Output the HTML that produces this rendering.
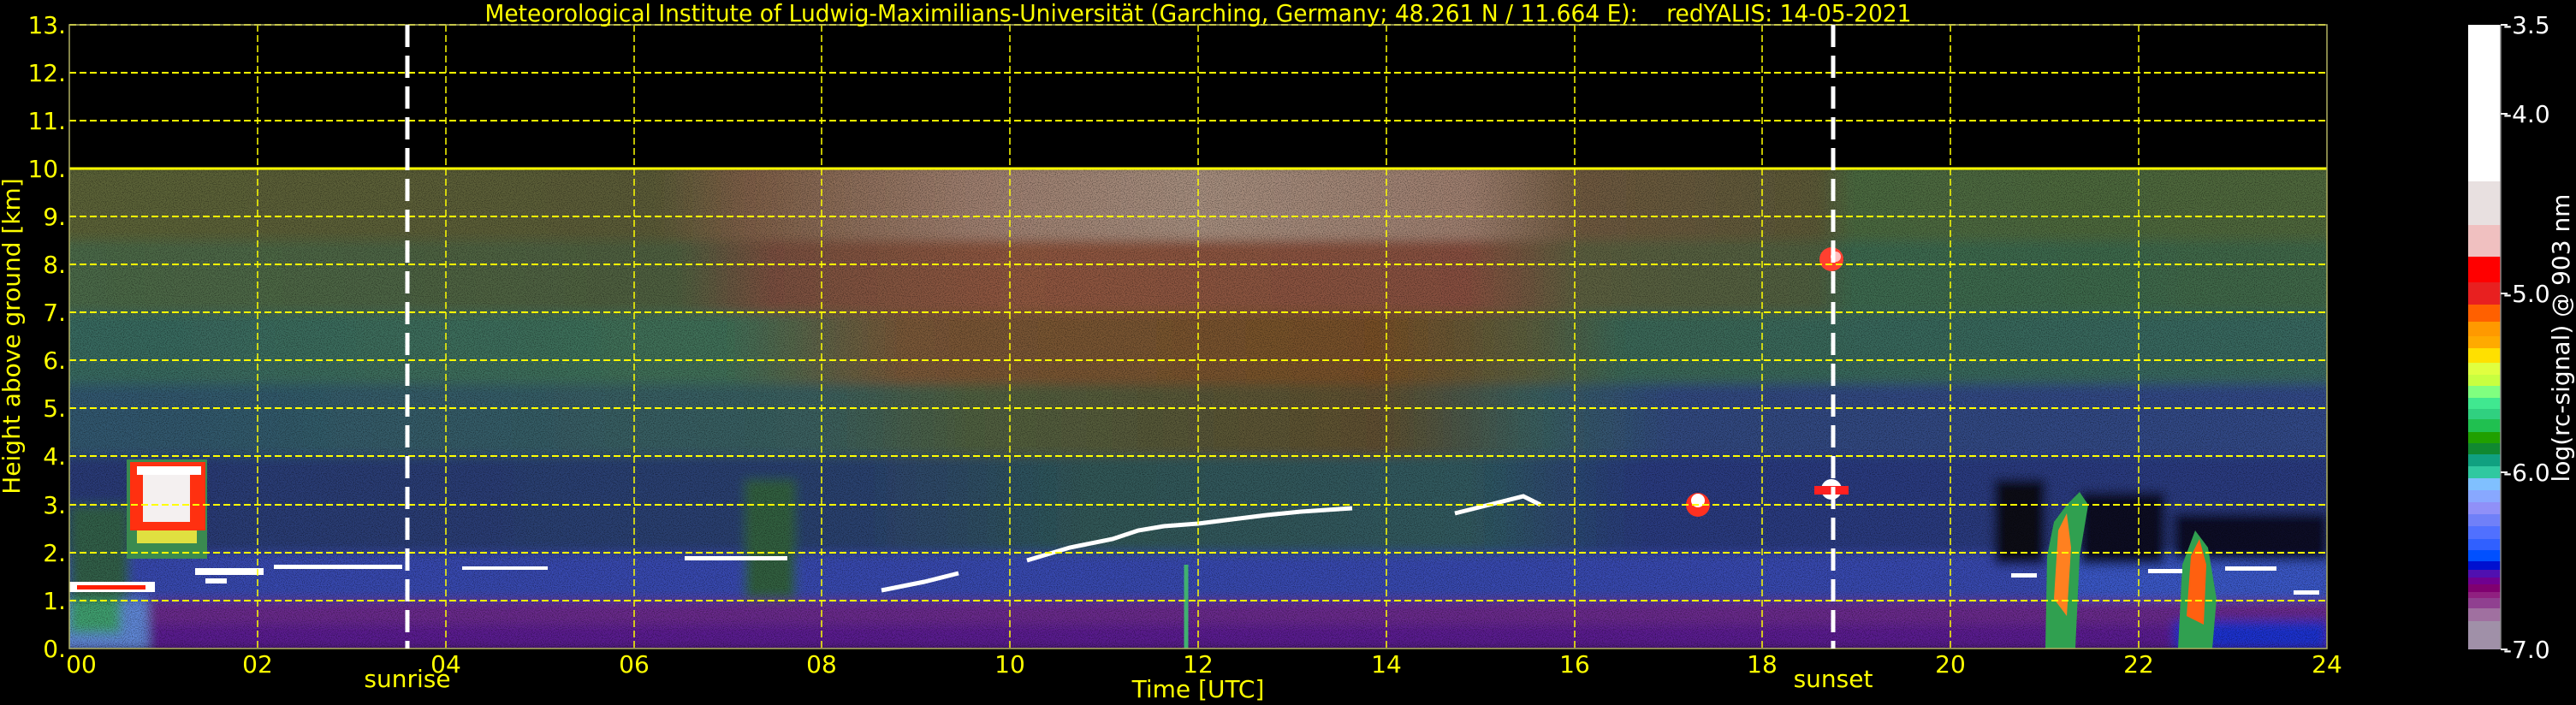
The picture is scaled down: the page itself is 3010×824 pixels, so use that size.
<!DOCTYPE html>
<html><head><meta charset="utf-8"><style>
html,body{margin:0;padding:0;background:#000;width:3010px;height:824px;overflow:hidden}
svg{display:block}
text{font-family:"DejaVu Sans","Liberation Sans",sans-serif;fill:#ffff00}
</style></head><body>
<svg width="3010" height="824" viewBox="0 0 3010 824" xmlns="http://www.w3.org/2000/svg">
<defs>
<linearGradient id="gA" x1="81" x2="2719" gradientUnits="userSpaceOnUse">
<stop offset="0" stop-color="#5c6438"/><stop offset=".26" stop-color="#5c5c38"/><stop offset=".3" stop-color="#806048"/><stop offset=".4" stop-color="#a08070"/><stop offset=".5" stop-color="#a89080"/><stop offset=".62" stop-color="#a08070"/><stop offset=".67" stop-color="#705a40"/><stop offset=".775" stop-color="#5c5a38"/><stop offset=".79" stop-color="#4c6a40"/><stop offset="1" stop-color="#50683c"/></linearGradient>
<linearGradient id="gB" x1="81" x2="2719" gradientUnits="userSpaceOnUse">
<stop offset="0" stop-color="#4c6a48"/><stop offset=".27" stop-color="#506040"/><stop offset=".31" stop-color="#7a5040"/><stop offset=".42" stop-color="#905840"/><stop offset=".62" stop-color="#885040"/><stop offset=".67" stop-color="#5c6040"/><stop offset=".775" stop-color="#506040"/><stop offset=".79" stop-color="#3c6a50"/><stop offset="1" stop-color="#406848"/></linearGradient>
<linearGradient id="gC" x1="81" x2="2719" gradientUnits="userSpaceOnUse">
<stop offset="0" stop-color="#386a60"/><stop offset=".29" stop-color="#407058"/><stop offset=".37" stop-color="#7a5838"/><stop offset=".58" stop-color="#785028"/><stop offset=".65" stop-color="#5a6040"/><stop offset=".69" stop-color="#3a6858"/><stop offset="1" stop-color="#386860"/></linearGradient>
<linearGradient id="gD" x1="81" x2="2719" gradientUnits="userSpaceOnUse">
<stop offset="0" stop-color="#305870"/><stop offset=".33" stop-color="#3a6060"/><stop offset=".4" stop-color="#506040"/><stop offset=".58" stop-color="#605030"/><stop offset=".65" stop-color="#3a6060"/><stop offset=".71" stop-color="#304a80"/><stop offset="1" stop-color="#304a88"/></linearGradient>
<linearGradient id="gE" x1="81" x2="2719" gradientUnits="userSpaceOnUse">
<stop offset="0" stop-color="#2a3a78"/><stop offset=".35" stop-color="#2c4270"/><stop offset=".45" stop-color="#305858"/><stop offset=".62" stop-color="#305a60"/><stop offset=".7" stop-color="#2a3a80"/><stop offset="1" stop-color="#2a3a80"/></linearGradient>
<linearGradient id="cb" x1="0" y1="29" x2="0" y2="759" gradientUnits="userSpaceOnUse">
<stop offset="0" stop-color="#fff"/><stop offset=".2507" stop-color="#fff"/><stop offset=".2507" stop-color="#e8e0e0"/><stop offset=".3205" stop-color="#e8e0e0"/><stop offset=".3205" stop-color="#f0c0c0"/><stop offset=".3712" stop-color="#f0c0c0"/><stop offset=".3712" stop-color="#ff0000"/><stop offset=".4123" stop-color="#ff0000"/><stop offset=".4123" stop-color="#e82020"/><stop offset=".4479" stop-color="#e82020"/><stop offset=".4479" stop-color="#ff6000"/><stop offset=".4753" stop-color="#ff6000"/><stop offset=".4753" stop-color="#ff9900"/><stop offset=".4986" stop-color="#ff9900"/><stop offset=".4986" stop-color="#ffaa00"/><stop offset=".5178" stop-color="#ffaa00"/><stop offset=".5178" stop-color="#ffe000"/><stop offset=".5411" stop-color="#ffe000"/><stop offset=".5411" stop-color="#e0ff40"/><stop offset=".5603" stop-color="#e0ff40"/><stop offset=".5603" stop-color="#c8ff40"/><stop offset=".5781" stop-color="#c8ff40"/><stop offset=".5781" stop-color="#80ff80"/><stop offset=".5973" stop-color="#80ff80"/><stop offset=".5973" stop-color="#40e890"/><stop offset=".6151" stop-color="#40e890"/><stop offset=".6151" stop-color="#30d080"/><stop offset=".6315" stop-color="#30d080"/><stop offset=".6315" stop-color="#20c050"/><stop offset=".6521" stop-color="#20c050"/><stop offset=".6521" stop-color="#20a000"/><stop offset=".6699" stop-color="#20a000"/><stop offset=".6699" stop-color="#108830"/><stop offset=".6877" stop-color="#108830"/><stop offset=".6877" stop-color="#10a080"/><stop offset=".7068" stop-color="#10a080"/><stop offset=".7068" stop-color="#30c8a0"/><stop offset=".726" stop-color="#30c8a0"/><stop offset=".726" stop-color="#80c0ff"/><stop offset=".7452" stop-color="#80c0ff"/><stop offset=".7452" stop-color="#88a8ff"/><stop offset=".7644" stop-color="#88a8ff"/><stop offset=".7644" stop-color="#9090f8"/><stop offset=".7836" stop-color="#9090f8"/><stop offset=".7836" stop-color="#7080f8"/><stop offset=".8027" stop-color="#7080f8"/><stop offset=".8027" stop-color="#5070ff"/><stop offset=".8233" stop-color="#5070ff"/><stop offset=".8233" stop-color="#3060ff"/><stop offset=".8411" stop-color="#3060ff"/><stop offset=".8411" stop-color="#0050ff"/><stop offset=".8589" stop-color="#0050ff"/><stop offset=".8589" stop-color="#0010d0"/><stop offset=".8726" stop-color="#0010d0"/><stop offset=".8726" stop-color="#5010b0"/><stop offset=".8849" stop-color="#5010b0"/><stop offset=".8849" stop-color="#700090"/><stop offset=".8959" stop-color="#700090"/><stop offset=".8959" stop-color="#800070"/><stop offset=".9082" stop-color="#800070"/><stop offset=".9082" stop-color="#902080"/><stop offset=".9178" stop-color="#902080"/><stop offset=".9178" stop-color="#904090"/><stop offset=".9342" stop-color="#904090"/><stop offset=".9342" stop-color="#a070a0"/><stop offset=".9548" stop-color="#a070a0"/><stop offset=".9548" stop-color="#a090a8"/><stop offset="1" stop-color="#a090a8"/></linearGradient>
<filter id="bl" x="-5%" y="-5%" width="110%" height="110%"><feGaussianBlur stdDeviation="6"/></filter>
<filter id="nz" filterUnits="userSpaceOnUse" x="81" y="197" width="2638" height="561"><feTurbulence type="fractalNoise" baseFrequency="0.9" numOctaves="1" seed="3"/><feColorMatrix type="matrix" values="0 0 0 0 0  0 0 0 0 0  0 0 0 0 0  0 0 0 -2.2 1.25"/></filter>
<clipPath id="pc"><rect x="81" y="197" width="2638" height="561"/></clipPath>
</defs>

<g clip-path="url(#pc)">
<g filter="url(#bl)">
<rect x="60" y="190" width="2680" height="95" fill="url(#gA)"/>
<rect x="60" y="281" width="2680" height="84" fill="url(#gB)"/>
<rect x="60" y="365" width="2680" height="84" fill="url(#gC)"/>
<rect x="60" y="449" width="2680" height="84" fill="url(#gD)"/>
<rect x="60" y="533" width="2680" height="113" fill="url(#gE)"/>
<rect x="60" y="646" width="2680" height="56" fill="#3848b0"/>
<rect x="60" y="702" width="2680" height="60" fill="#6a2a8c"/>
<rect x="60" y="730" width="2680" height="30" fill="#5a1a90"/>
<rect x="2420" y="646" width="300" height="56" fill="#3a58c8"/>
<rect x="2540" y="725" width="180" height="35" fill="#1a30d0"/>
<rect x="2330" y="560" width="60" height="100" fill="#080818"/>
<rect x="2430" y="575" width="100" height="85" fill="#101020"/>
<rect x="2540" y="600" width="180" height="55" fill="#101028"/>
<rect x="60" y="700" width="113" height="60" fill="#6088d8"/>
<rect x="81" y="590" width="70" height="110" fill="#306048"/>
<rect x="81" y="700" width="60" height="40" fill="#40a070"/>
<rect x="870" y="560" width="60" height="140" fill="#306040"/>
</g>
<rect x="81" y="197" width="2638" height="561" fill="#000" filter="url(#nz)" opacity=".55"/>
<rect x="148" y="537" width="94" height="116" fill="#3a8a50"/>
<rect x="152" y="540" width="88" height="80" fill="#ff3010"/>
<rect x="160" y="545" width="75" height="10" fill="#fff"/>
<rect x="167" y="555" width="55" height="55" fill="#f4f0f0"/>
<rect x="160" y="620" width="70" height="15" fill="#e0e040"/>
<rect x="81" y="680" width="100" height="12" fill="#fff"/>
<rect x="90" y="684" width="80" height="5" fill="#ff2000"/>
<g fill="#fff">
<rect x="228" y="664" width="80" height="8"/><rect x="240" y="676" width="25" height="6"/>
<rect x="320" y="660" width="150" height="5"/><rect x="540" y="662" width="100" height="4"/>
<rect x="800" y="650" width="120" height="5"/>
</g>
<g stroke="#fff" stroke-width="5" fill="none">
<polyline points="1200,655 1250,640 1300,630 1330,620 1360,615 1400,612 1440,607 1480,602 1520,598 1580,594"/>
<polyline points="1700,600 1740,590 1780,580 1800,590"/>
<polyline points="1030,690 1080,680 1120,670"/>
</g>
<circle cx="1984" cy="590" r="14" fill="#ff3020"/><circle cx="1984" cy="585" r="8" fill="#fff"/>
<circle cx="2140" cy="572" r="12" fill="#fff"/><rect x="2120" y="568" width="40" height="10" fill="#ff2020"/>
<circle cx="2140" cy="303" r="14" fill="#ff4030"/><circle cx="2145" cy="300" r="6" fill="#ffc0c0"/>
<path d="M2390,758 L2392,650 L2400,610 L2415,590 L2430,575 L2440,590 L2430,650 L2425,758 Z" fill="#30a050"/>
<path d="M2400,700 L2405,620 L2415,600 L2420,640 L2415,720 Z" fill="#ff8020"/>
<path d="M2545,758 L2550,660 L2565,620 L2580,640 L2590,700 L2585,758 Z" fill="#30a050"/>
<path d="M2555,720 L2560,650 L2570,630 L2578,660 L2575,730 Z" fill="#ff6010"/>
<g fill="#fff"><rect x="2350" y="670" width="30" height="5"/><rect x="2510" y="665" width="40" height="5"/><rect x="2600" y="662" width="60" height="5"/><rect x="2680" y="690" width="30" height="5"/></g>
<line x1="1386" y1="660" x2="1386" y2="758" stroke="#40b070" stroke-width="5"/>
</g>

<g stroke="#ffff00" stroke-width="2" stroke-dasharray="8,4" fill="none">
<line x1="81" y1="29" x2="2719" y2="29"/>
<line x1="81" y1="85" x2="2719" y2="85"/>
<line x1="81" y1="141" x2="2719" y2="141"/>
<line x1="81" y1="197" x2="2719" y2="197" stroke-dasharray="none" stroke-width="3"/>
<line x1="81" y1="253" x2="2719" y2="253"/>
<line x1="81" y1="309" x2="2719" y2="309"/>
<line x1="81" y1="365" x2="2719" y2="365"/>
<line x1="81" y1="421" x2="2719" y2="421"/>
<line x1="81" y1="477" x2="2719" y2="477"/>
<line x1="81" y1="533" x2="2719" y2="533"/>
<line x1="81" y1="590" x2="2719" y2="590"/>
<line x1="81" y1="646" x2="2719" y2="646"/>
<line x1="81" y1="702" x2="2719" y2="702"/>
<g stroke-width="1.5">
<line x1="301" y1="29" x2="301" y2="758"/><line x1="521" y1="29" x2="521" y2="758"/><line x1="741" y1="29" x2="741" y2="758"/><line x1="960" y1="29" x2="960" y2="758"/><line x1="1180" y1="29" x2="1180" y2="758"/><line x1="1400" y1="29" x2="1400" y2="758"/><line x1="1620" y1="29" x2="1620" y2="758"/><line x1="1840" y1="29" x2="1840" y2="758"/><line x1="2059" y1="29" x2="2059" y2="758"/><line x1="2279" y1="29" x2="2279" y2="758"/><line x1="2499" y1="29" x2="2499" y2="758"/>
</g>
</g>
<rect x="81" y="29" width="2638" height="729" fill="none" stroke="#b0b060" stroke-width="1.5"/>
<g stroke="#fff" stroke-width="5" stroke-dasharray="26,10">
<line x1="476" y1="29" x2="476" y2="758"/>
<line x1="2142" y1="29" x2="2142" y2="758"/>
</g>

<text x="1400" y="25" font-size="28" text-anchor="middle" textLength="1667" lengthAdjust="spacingAndGlyphs">Meteorological Institute of Ludwig-Maximilians-Universität (Garching, Germany; 48.261 N / 11.664 E):&#160;&#160;&#160;&#160;redYALIS: 14-05-2021</text>
<g font-size="28" text-anchor="end">
<text x="77" y="39">13.</text><text x="77" y="95">12.</text><text x="77" y="151">11.</text><text x="77" y="207">10.</text><text x="77" y="263">9.</text><text x="77" y="319">8.</text><text x="77" y="375">7.</text><text x="77" y="431">6.</text><text x="77" y="487">5.</text><text x="77" y="543">4.</text><text x="77" y="600">3.</text><text x="77" y="656">2.</text><text x="77" y="712">1.</text><text x="77" y="768">0.</text>
</g>
<g font-size="28" text-anchor="middle">
<text x="95" y="786">00</text><text x="301" y="786">02</text><text x="521" y="786">04</text><text x="741" y="786">06</text><text x="960" y="786">08</text><text x="1180" y="786">10</text><text x="1400" y="786">12</text><text x="1620" y="786">14</text><text x="1840" y="786">16</text><text x="2059" y="786">18</text><text x="2279" y="786">20</text><text x="2499" y="786">22</text><text x="2719" y="786">24</text>
<text x="476" y="803">sunrise</text><text x="2142" y="803">sunset</text>
<text x="1400" y="815">Time [UTC]</text>
</g>
<text transform="translate(23,393) rotate(-90)" font-size="28" text-anchor="middle">Height above ground [km]</text>

<rect x="2884" y="29" width="38" height="730" fill="url(#cb)"/>
<line x1="2922" y1="29" x2="2922" y2="759" stroke="#888" stroke-width="1.5"/>
<g stroke="#fff" stroke-width="2"><line x1="2922" y1="29" x2="2930" y2="29"/><line x1="2922" y1="133" x2="2930" y2="133"/><line x1="2922" y1="343" x2="2930" y2="343"/><line x1="2922" y1="552" x2="2930" y2="552"/><line x1="2922" y1="759" x2="2930" y2="759"/></g>
<g font-size="28">
<text x="2925" y="39" style="fill:#fff">-3.5</text><text x="2925" y="143" style="fill:#fff">-4.0</text><text x="2925" y="353" style="fill:#fff">-5.0</text><text x="2925" y="562" style="fill:#fff">-6.0</text><text x="2925" y="769" style="fill:#fff">-7.0</text>
</g>
<text transform="translate(3002,395) rotate(-90)" font-size="28" text-anchor="middle" style="fill:#fff">log(rc-signal) @ 903 nm</text>
</svg>
</body></html>
